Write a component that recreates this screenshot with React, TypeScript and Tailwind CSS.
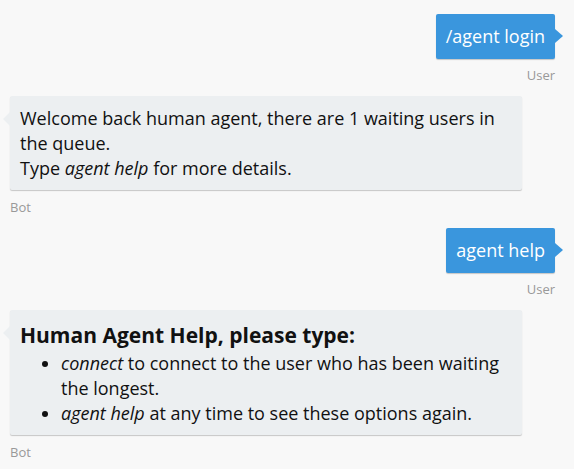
import React from "react"

const font = { fontFamily: '"Open Sans", "Noto Sans", sans-serif' }

function UserMessage({ text }: { text: string }) {
  return (
    <div className="flex flex-col items-end">
      <div className="relative rounded-[2px] bg-[#3a96dd] px-[10px] py-[9px] text-[18px] leading-[27px] text-white shadow-[0_1px_1px_rgba(0,0,0,0.2)]">
        {text}
        <span className="absolute top-[15px] -right-[8px] h-0 w-0 border-y-[7px] border-l-[8px] border-y-transparent border-l-[#3a96dd]" />
      </div>
      <div className="mt-[8px] text-[13px] leading-[16px] text-[#999]">User</div>
    </div>
  )
}

function BotMessage({ children }: { children: React.ReactNode }) {
  return (
    <div className="flex flex-col items-start">
      <div className="relative w-[512px] rounded-[2px] bg-[#eceff1] px-[10px] pt-[10px] pb-[9px] text-[18px] leading-[25px] text-[#111] shadow-[0_1px_1px_rgba(0,0,0,0.2)]">
        {children}
        <span className="absolute top-[16px] -left-[7px] h-0 w-0 border-y-[7px] border-r-[7px] border-y-transparent border-r-[#eceff1]" />
      </div>
      <div className="mt-[9px] text-[13px] leading-[16px] text-[#999]">Bot</div>
    </div>
  )
}

export default function App() {
  return (
    <div className="h-[469px] w-[574px] overflow-hidden bg-[#f8f8f8] pt-[14px] pl-[10px] pr-[19px]" style={font}>
      <div className="flex flex-col gap-[13px]">
        <UserMessage text="/agent login" />
        <BotMessage>
          <p>Welcome back human agent, there are 1 waiting users in the queue.</p>
          <p>
            Type <em>agent help</em> for more details.
          </p>
        </BotMessage>
        <UserMessage text="agent help" />
        <BotMessage>
          <h3 className="text-[21px] font-bold leading-[31px]">Human Agent Help, please type:</h3>
          <ul className="list-disc pl-[41px]">
            <li>
              <em>connect</em> to connect to the user who has been waiting the longest.
            </li>
            <li>
              <em>agent help</em> at any time to see these options again.
            </li>
          </ul>
        </BotMessage>
      </div>
    </div>
  )
}
